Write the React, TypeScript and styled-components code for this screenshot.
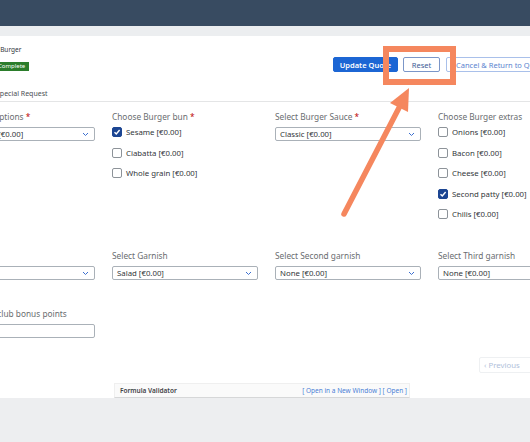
import React from 'react'
import styled, { createGlobalStyle } from 'styled-components'

const GlobalStyle = createGlobalStyle`
  html, body {
    margin: 0;
    padding: 0;
    width: 530px;
    height: 442px;
    overflow: hidden;
    background: #edeef0;
    font-family: 'Noto Sans', 'Open Sans', Arial, sans-serif;
  }
`

const Screen = styled.div`
  position: relative;
  width: 530px;
  height: 442px;
  overflow: hidden;
`

const ShellBar = styled.div`
  height: 26px;
  background: #384b61;
`

const SubBar = styled.div`
  height: 10px;
  background: #eceef0;
`

const Page = styled.div`
  background: #ffffff;
  overflow: hidden;
`

const Header = styled.div`
  display: flex;
  justify-content: space-between;
  align-items: flex-start;
  padding-top: 9px;
  height: 27px;
`

const HeaderLeft = styled.div`
  display: flex;
  flex-direction: column;
  align-items: flex-start;
`

const Title = styled.div`
  font-size: 6.5px;
  line-height: 10px;
  color: #32363a;
  margin-left: -22px;
  white-space: nowrap;
`

const Badge = styled.span`
  margin-top: 7px;
  margin-left: -6px;
  height: 9px;
  line-height: 9px;
  padding: 0 4px;
  background: #2b7d2b;
  color: #ffffff;
  font-size: 6px;
  white-space: nowrap;
`

const Actions = styled.div`
  display: flex;
  margin-top: 12px;
  margin-right: -18px;
`

const Button = styled.button<{ $variant: 'primary' | 'ghost' | 'light'; $width: number; $gap?: number }>`
  width: ${(p) => p.$width}px;
  height: 15px;
  margin-left: ${(p) => p.$gap ?? 0}px;
  padding: ${(p) => (p.$variant === 'light' ? '0 0 0 9px' : '0')};
  text-align: ${(p) => (p.$variant === 'light' ? 'left' : 'center')};
  border-radius: 2px;
  font-family: inherit;
  font-size: 7.5px;
  white-space: nowrap;
  overflow: hidden;
  cursor: pointer;
  font-weight: ${(p) => (p.$variant === 'primary' ? 600 : 400)};
  background: ${(p) => (p.$variant === 'primary' ? '#1c66d4' : '#ffffff')};
  color: ${(p) =>
    p.$variant === 'primary' ? '#ffffff' : p.$variant === 'ghost' ? '#3d5b96' : '#5b84cf'};
  border: 1px solid
    ${(p) => (p.$variant === 'primary' ? '#1c66d4' : p.$variant === 'ghost' ? '#7b96c8' : '#a9c0ea')};
`

const TabBar = styled.div`
  margin-top: 13px;
  height: 16px;
  display: flex;
  align-items: center;
  border-bottom: 1px solid #e4e5e6;
`

const Tab = styled.span`
  margin-left: -4px;
  font-size: 7px;
  color: #4b4f54;
  white-space: nowrap;
`

const FormRow = styled.div<{ $top: number }>`
  display: grid;
  grid-template-columns: repeat(4, 146px);
  column-gap: 17px;
  margin-left: -51px;
  margin-top: ${(p) => p.$top}px;
  align-items: start;
`

const Field = styled.div`
  display: flex;
  flex-direction: column;
  gap: 5px;
  min-width: 0;
`

const Label = styled.div`
  font-size: 8.3px;
  line-height: 10px;
  height: 10px;
  color: #6a6d70;
  white-space: nowrap;
`

const Required = styled.span`
  color: #bb0000;
`

const SelectBox = styled.div`
  height: 14px;
  box-sizing: border-box;
  border: 1px solid #aab1b8;
  border-radius: 2px;
  display: flex;
  align-items: center;
  justify-content: space-between;
  padding: 0 5px 0 4px;
  font-size: 7.8px;
  color: #32363a;
  white-space: nowrap;
  background: #ffffff;
`

const TextInput = styled.div`
  height: 14px;
  box-sizing: border-box;
  border: 1px solid #aab1b8;
  border-radius: 2px;
  background: #ffffff;
`

const CheckList = styled.div`
  display: flex;
  flex-direction: column;
  gap: 10.5px;
`

const CheckRow = styled.div`
  display: flex;
  align-items: center;
  gap: 4px;
  height: 10px;
  font-size: 7.8px;
  color: #32363a;
  white-space: nowrap;
`

const Box = styled.span<{ $checked?: boolean }>`
  width: 10px;
  height: 10px;
  box-sizing: border-box;
  border-radius: 2px;
  border: 1px solid ${(p) => (p.$checked ? '#1c4592' : '#8d9399')};
  background: ${(p) => (p.$checked ? '#1c4592' : '#ffffff')};
  display: flex;
  align-items: center;
  justify-content: center;
  flex-shrink: 0;
`

const Footer = styled.div`
  display: flex;
  justify-content: flex-end;
  margin-top: 19px;
`

const PrevButton = styled.button`
  width: 62px;
  height: 16px;
  margin-right: -11px;
  padding: 0 0 0 4px;
  text-align: left;
  background: #ffffff;
  border: 1px solid #eef0f2;
  border-radius: 2px;
  color: #b0c0da;
  font-family: inherit;
  font-size: 7.8px;
  white-space: nowrap;
`

const Validator = styled.div`
  margin: 10px 0 0 114px;
  width: 296px;
  height: 15px;
  box-sizing: border-box;
  display: flex;
  align-items: center;
  justify-content: space-between;
  padding: 0 2px 0 5px;
  background: #fafafa;
  border: 1px solid #efefef;
  border-bottom: 1px solid #d6d7d8;
`

const ValidatorTitle = styled.span`
  font-size: 6.5px;
  font-weight: 600;
  color: #3f4347;
`

const ValidatorLinks = styled.span`
  font-size: 6.5px;
  color: #4a7fd6;
`

const Overlay = styled.svg`
  position: absolute;
  left: 0;
  top: 0;
  pointer-events: none;
`

const Chevron = () => (
  <svg width="7" height="5" viewBox="0 0 7 5">
    <polyline points="1,1 3.5,3.5 6,1" fill="none" stroke="#3b6fd0" strokeWidth="1" />
  </svg>
)

const Check = () => (
  <svg width="8" height="8" viewBox="0 0 8 8">
    <polyline points="1.5,4.2 3.3,6 6.6,2" fill="none" stroke="#ffffff" strokeWidth="1.4" />
  </svg>
)

const Select = ({ value }: { value: string }) => (
  <SelectBox>
    <span>{value}</span>
    <Chevron />
  </SelectBox>
)

const Checkbox = ({ label, checked }: { label: string; checked?: boolean }) => (
  <CheckRow>
    <Box $checked={checked}>{checked && <Check />}</Box>
    {label}
  </CheckRow>
)

const buns = [
  { label: 'Sesame [€0.00]', checked: true },
  { label: 'Ciabatta [€0.00]' },
  { label: 'Whole grain [€0.00]' },
]

const extras = [
  { label: 'Onions [€0.00]' },
  { label: 'Bacon [€0.00]' },
  { label: 'Cheese [€0.00]' },
  { label: 'Second patty [€0.00]', checked: true },
  { label: 'Chilis [€0.00]' },
]

export default function App() {
  return (
    <>
      <GlobalStyle />
      <Screen>
        <ShellBar />
        <SubBar />
        <Page>
          <Header>
            <HeaderLeft>
              <Title>Classic Burger</Title>
              <Badge>Complete</Badge>
            </HeaderLeft>
            <Actions>
              <Button $variant="primary" $width={65}>Update Quote</Button>
              <Button $variant="ghost" $width={37} $gap={5}>Reset</Button>
              <Button $variant="light" $width={102} $gap={6}>Cancel &amp; Return to Quote</Button>
            </Actions>
          </Header>

          <TabBar>
            <Tab>Special Request</Tab>
          </TabBar>

          <FormRow $top={10}>
            <Field>
              <Label>
                Select your options <Required>*</Required>
              </Label>
              <Select value="Double size [€0.00]" />
            </Field>
            <Field>
              <Label>
                Choose Burger bun <Required>*</Required>
              </Label>
              <CheckList>
                {buns.map((b) => (
                  <Checkbox key={b.label} label={b.label} checked={b.checked} />
                ))}
              </CheckList>
            </Field>
            <Field>
              <Label>
                Select Burger Sauce <Required>*</Required>
              </Label>
              <Select value="Classic [€0.00]" />
            </Field>
            <Field>
              <Label>Choose Burger extras</Label>
              <CheckList>
                {extras.map((e) => (
                  <Checkbox key={e.label} label={e.label} checked={e.checked} />
                ))}
              </CheckList>
            </Field>
          </FormRow>

          <FormRow $top={32}>
            <Field>
              <Label>Drink</Label>
              <Select value="Water" />
            </Field>
            <Field>
              <Label>Select Garnish</Label>
              <Select value="Salad [€0.00]" />
            </Field>
            <Field>
              <Label>Select Second garnish</Label>
              <Select value="None [€0.00]" />
            </Field>
            <Field>
              <Label>Select Third garnish</Label>
              <Select value="None [€0.00]" />
            </Field>
          </FormRow>

          <FormRow $top={29}>
            <Field>
              <Label>Redeem my club bonus points</Label>
              <TextInput />
            </Field>
          </FormRow>

          <Footer>
            <PrevButton>‹ Previous</PrevButton>
          </Footer>

          <Validator>
            <ValidatorTitle>Formula Validator</ValidatorTitle>
            <ValidatorLinks>[ Open in a New Window ] [ Open ]</ValidatorLinks>
          </Validator>
        </Page>

        <Overlay width="530" height="442" viewBox="0 0 530 442">
          <rect x="386" y="49" width="67" height="33" fill="none" stroke="#f5875e" strokeWidth="6" />
          <line x1="344" y1="214" x2="401" y2="104" stroke="#f5875e" strokeWidth="5.5" strokeLinecap="round" />
          <polygon points="409,88 390,103 408,112" fill="#f5875e" />
        </Overlay>
      </Screen>
    </>
  )
}
